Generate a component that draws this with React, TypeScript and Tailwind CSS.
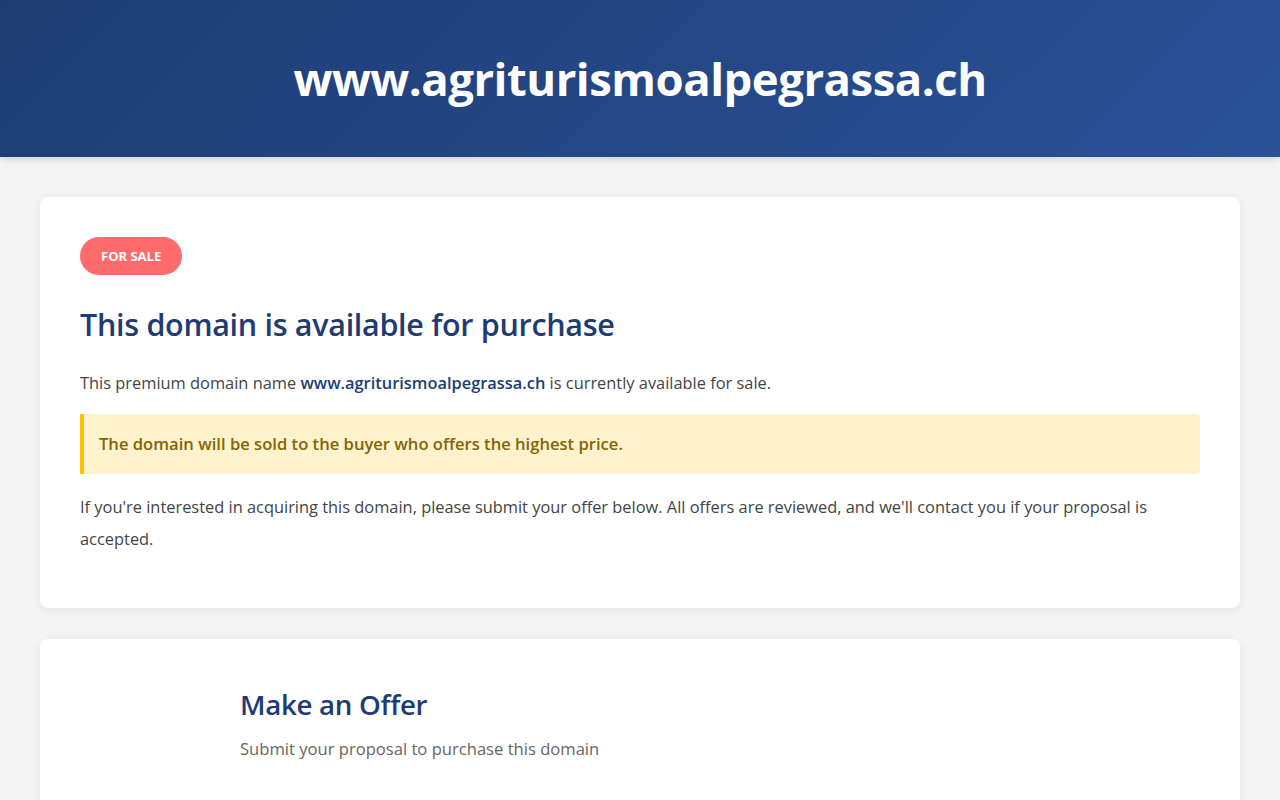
export default function App() {
  const domain = "www.agriturismoalpegrassa.ch";

  return (
    <div className="min-h-screen bg-[#f4f4f4] text-[#444] font-['Open_Sans','Noto_Sans',sans-serif]">
      <header className="bg-[linear-gradient(135deg,#1e3c72_0%,#2a5298_100%)] py-[50px] text-center shadow-[0_2px_8px_rgba(0,0,0,0.15)]">
        <h1 className="text-[45.5px] leading-[57px] font-bold text-white tracking-[-0.5px]">{domain}</h1>
      </header>

      <main className="mx-auto max-w-[1200px] pt-10">
        <section className="bg-white rounded-lg shadow-[0_2px_10px_rgba(0,0,0,0.08)] px-10 pt-10 pb-[53px]">
          <span className="inline-block bg-[#ff6b6b] text-white text-[13px] font-bold uppercase rounded-full px-[21px] py-[9px] leading-5">
            For Sale
          </span>
          <h2 className="mt-[29px] text-[30.5px] leading-[40px] font-semibold text-[#1e3c72] tracking-[-0.3px]">
            This domain is available for purchase
          </h2>
          <p className="mt-[26px] text-[16.4px] leading-[26px]">
            This premium domain name <strong className="text-[#1e3c72] font-semibold">{domain}</strong> is currently available for sale.
          </p>
          <div className="mt-[18px] bg-[#fff3cd] border-l-4 border-[#ffc107] rounded-r text-[#856404] font-semibold text-[16.6px] leading-6 px-[15px] py-[18px]">
            The domain will be sold to the buyer who offers the highest price.
          </div>
          <p className="mt-[17px] text-[16.4px] leading-8">
            If you're interested in acquiring this domain, please submit your offer below. All offers are reviewed, and we'll contact you if your proposal is accepted.
          </p>
        </section>

        <section className="mt-[31px] bg-white rounded-lg shadow-[0_2px_10px_rgba(0,0,0,0.08)] p-10">
          <div className="mx-auto max-w-[800px] pt-[7px]">
            <h2 className="text-[27.7px] leading-9 font-semibold text-[#1e3c72] tracking-[-0.3px]">Make an Offer</h2>
            <p className="mt-[15px] text-[16.6px] leading-6 text-[#666]">Submit your proposal to purchase this domain</p>
            <div className="h-40" />
          </div>
        </section>
      </main>
    </div>
  );
}
